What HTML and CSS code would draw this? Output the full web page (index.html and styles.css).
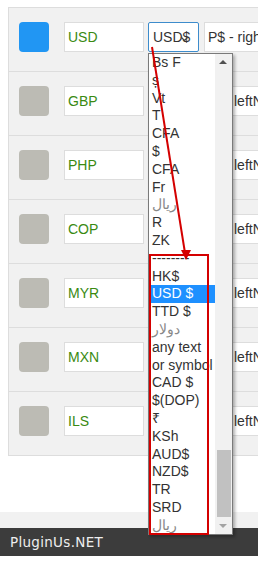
FILE: index.html
```html
<!DOCTYPE html>
<html lang="en">
<head>
    <meta charset="UTF-8">
    <meta name="viewport" content="width=device-width, initial-scale=1.0">
    <title>Currencies</title>
    <link rel="stylesheet" href="styles.css">
</head>
<body>
    <div class="page">
        <div class="rows">
            <div class="row">
                <div class="swatch active"></div>
                <div class="field code">USD</div>
                <div class="field symbol focused">USD$<svg class="chev" width="9" height="6" viewBox="0 0 9 6"><path d="M1 1 L4.5 4.5 L8 1" fill="none" stroke="#444" stroke-width="1.2"/></svg></div>
                <div class="field position">P$ - right</div>
            </div>
            <div class="row">
                <div class="swatch"></div>
                <div class="field code">GBP</div>
                <div class="field symbol wide"></div>
                <div class="field position tight">leftN</div>
            </div>
            <div class="row">
                <div class="swatch"></div>
                <div class="field code">PHP</div>
                <div class="field symbol wide"></div>
                <div class="field position tight">leftN</div>
            </div>
            <div class="row">
                <div class="swatch"></div>
                <div class="field code">COP</div>
                <div class="field symbol wide"></div>
                <div class="field position tight">leftN</div>
            </div>
            <div class="row">
                <div class="swatch"></div>
                <div class="field code">MYR</div>
                <div class="field symbol wide"></div>
                <div class="field position tight">leftN</div>
            </div>
            <div class="row">
                <div class="swatch"></div>
                <div class="field code">MXN</div>
                <div class="field symbol wide"></div>
                <div class="field position tight">leftN</div>
            </div>
            <div class="row">
                <div class="swatch"></div>
                <div class="field code">ILS</div>
                <div class="field symbol wide"></div>
                <div class="field position tight">leftN</div>
            </div>
        </div>
    </div>
    <div class="strip"></div>
    <div class="footer">PluginUs.NET</div>

    <!-- open symbol dropdown -->
    <div class="dropdown">
        <ul class="options">
            <li>Bs F</li>
            <li>ș</li>
            <li>Vt</li>
            <li>T</li>
            <li>CFA</li>
            <li>$</li>
            <li>CFA</li>
            <li>Fr</li>
            <li class="ar">ريال</li>
            <li>R</li>
            <li>ZK</li>
            <li>--------</li>
            <li>HK$</li>
            <li class="selected">USD $</li>
            <li>TTD $</li>
            <li class="ar">دولار</li>
            <li>any text</li>
            <li>or symbol</li>
            <li>CAD $</li>
            <li>$(DOP)</li>
            <li>₹</li>
            <li>KSh</li>
            <li>AUD$</li>
            <li>NZD$</li>
            <li>TR</li>
            <li>SRD</li>
            <li class="ar">ريال</li>
        </ul>
        <div class="scrollbar">
            <span class="arrow up"></span>
            <span class="thumb"></span>
            <span class="arrow down"></span>
        </div>
    </div>

    <div class="highlight"></div>
    <svg class="pointer" width="258" height="563" viewBox="0 0 258 563">
        <line x1="152" y1="47" x2="185" y2="253" stroke="#d40000" stroke-width="2"/>
        <polygon points="181,250 191,250 186,260" fill="#d40000"/>
    </svg>
</body>
</html>
```

FILE: styles.css
```css
body {
    margin: 0;
    background: #fff;
    font-family: "Liberation Sans", Arial, sans-serif;
    font-size: 14px;
    color: #333;
    overflow: hidden;
    height: 563px;
    position: relative;
}
.page {
    height: 512px;
    padding: 7px 0 0 8px;
    box-sizing: border-box;
    overflow: hidden;
}
.rows {
    border-top: 1px solid #ddd;
    border-left: 1px solid #ddd;
    width: 400px;
}
.row {
    display: flex;
    align-items: flex-start;
    background: #f1f1f1;
    border-bottom: 1px solid #ddd;
    padding: 14px 0 19px 10px;
}
.swatch {
    width: 30px;
    height: 30px;
    border-radius: 4px;
    background: #bcbbb4;
    flex-shrink: 0;
}
.swatch.active {
    background: #2196f3;
}
.field {
    height: 30px;
    box-sizing: border-box;
    border: 1px solid #ddd;
    background: #fff;
    line-height: 28px;
    padding-left: 3px;
    white-space: nowrap;
    overflow: hidden;
    flex-shrink: 0;
    position: relative;
}
.code {
    width: 80px;
    margin-left: 15px;
    color: #3a8a12;
}
.symbol {
    width: 51px;
    margin-left: 4px;
}
.symbol.wide {
    width: 77px;
}
.focused {
    border-color: #3d8ccc;
    border-radius: 2px;
    padding-left: 4px;
}
.chev {
    position: absolute;
    left: 31px;
    top: 13px;
}
.position {
    width: 120px;
    margin-left: 5px;
}
.position.tight {
    margin-left: 4px;
    padding-left: 4px;
}
.strip {
    height: 16px;
    background: #f1f1f1;
}
.footer {
    height: 28px;
    background: #3c3c3c;
    color: #eee;
    font-family: "DejaVu Sans", sans-serif;
    font-size: 13.5px;
    letter-spacing: 0.3px;
    line-height: 28px;
    padding-left: 10px;
}
.dropdown {
    position: absolute;
    left: 148px;
    top: 53px;
    width: 85px;
    height: 482px;
    box-sizing: border-box;
    border: 1px solid #7a7a7a;
    background: #fff;
    box-shadow: 2px 2px 3px rgba(0, 0, 0, 0.3);
    display: flex;
    overflow: hidden;
}
.options {
    list-style: none;
    margin: 0;
    padding: 0;
    flex: 1;
}
.options li {
    height: 17.8px;
    line-height: 17.8px;
    padding-left: 3px;
    white-space: nowrap;
    color: #333;
}
.options li.ar {
    color: #888;
}
.options li.selected {
    background: #1e90ff;
    color: #fff;
}
.scrollbar {
    width: 17px;
    background: #f1f1f1;
    position: relative;
}
.arrow {
    position: absolute;
    left: 4px;
    width: 0;
    height: 0;
    border-left: 4px solid transparent;
    border-right: 4px solid transparent;
}
.arrow.up {
    top: 6px;
    border-bottom: 4px solid #505050;
}
.arrow.down {
    bottom: 6px;
    border-top: 4px solid #a3a3a3;
}
.thumb {
    position: absolute;
    left: 2px;
    right: 1px;
    top: 396px;
    height: 67px;
    background: #c1c1c1;
}
.highlight {
    position: absolute;
    left: 149px;
    top: 254px;
    width: 60px;
    height: 281px;
    box-sizing: border-box;
    border: 2px solid #d40000;
}
.pointer {
    position: absolute;
    left: 0;
    top: 0;
}
```
